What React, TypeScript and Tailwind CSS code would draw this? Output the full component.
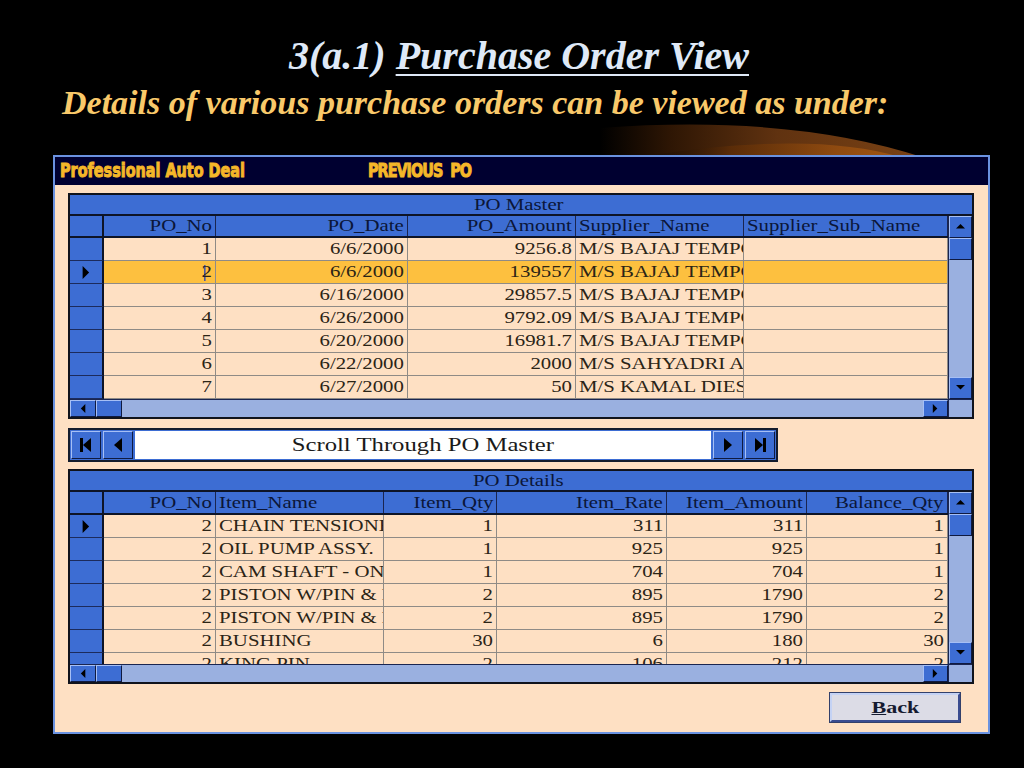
import React from 'react';

const serif = "font-['Liberation_Serif','Times_New_Roman',serif]";

type Align = 'l' | 'r';

function Tri({ dir, size = 8 }: { dir: 'up' | 'down' | 'left' | 'right'; size?: number }) {
  const pts =
    dir === 'up' ? '0,6 5,1 10,6' : dir === 'down' ? '0,1 5,6 10,1' : dir === 'left' ? '7,0 2,5 7,10' : '2,0 7,5 2,10';
  return (
    <svg width={size} height={size} viewBox="0 0 10 10" className="block">
      <polygon points={pts} fill="#000" />
    </svg>
  );
}

function ScrollBtn({ dir, className = '' }: { dir: 'up' | 'down' | 'left' | 'right'; className?: string }) {
  return (
    <div
      className={`bg-[#3d6dd3] border border-t-[#a6bff5] border-l-[#a6bff5] border-b-[#0f1a40] border-r-[#0f1a40] flex items-center justify-center ${className}`}
    >
      <Tri dir={dir} size={9} />
    </div>
  );
}

function Txt({ children, align }: { children: React.ReactNode; align: Align }) {
  return (
    <span
      className={`inline-block whitespace-nowrap scale-x-[1.3] ${align === 'r' ? 'origin-right' : 'origin-left'}`}
    >
      {children}
    </span>
  );
}

function Cell({ children, align, hl }: { children?: React.ReactNode; align: Align; hl?: boolean }) {
  return (
    <div
      className={`h-full overflow-hidden flex items-center border-r border-b border-[#8f8b86] text-[16px] text-[#2b2416] ${
        hl ? 'bg-[#fdc03f]' : 'bg-[#fee0c3]'
      } ${align === 'r' ? 'justify-end pr-[3px]' : 'justify-start pl-[3px]'}`}
    >
      <Txt align={align}>{children}</Txt>
    </div>
  );
}

function HeadCell({ children, align }: { children: React.ReactNode; align: Align }) {
  return (
    <div
      className={`h-full overflow-hidden flex items-center bg-[#3d6dd3] border-r border-[#1a2550] text-[16px] text-[#0b1638] ${
        align === 'r' ? 'justify-end pr-[3px]' : 'justify-start pl-[3px]'
      }`}
    >
      <Txt align={align}>{children}</Txt>
    </div>
  );
}

function Selector({ active }: { active?: boolean }) {
  return (
    <div className="h-full bg-[#3d6dd3] border-r-2 border-r-[#0e1426] border-b border-b-[#1c2b5c] flex items-center justify-center">
      {active && <Tri dir="right" size={13} />}
    </div>
  );
}

function HScroll() {
  return (
    <div className="flex h-[18px] border-t border-[#1a2550]">
      <div className="w-[878px] bg-[#9ab0e0] flex">
        <ScrollBtn dir="left" className="w-[26px]" />
        <div className="w-[26px] bg-[#3d6dd3] border border-t-[#a6bff5] border-l-[#a6bff5] border-b-[#0f1a40] border-r-[#0f1a40]" />
        <div className="flex-1" />
        <ScrollBtn dir="right" className="w-[25px]" />
      </div>
      <div className="w-[24px] bg-[#9ab0e0] border-l border-[#1a2550]" />
    </div>
  );
}

function VScroll({ rowH }: { rowH: string }) {
  return (
    <div className="w-[24px] flex flex-col bg-[#9ab0e0] border-l border-[#1a2550]">
      <ScrollBtn dir="up" className={rowH} />
      <div className={`${rowH} bg-[#3d6dd3] border border-t-[#a6bff5] border-l-[#a6bff5] border-b-[#0f1a40] border-r-[#0f1a40]`} />
      <div className="flex-1" />
      <ScrollBtn dir="down" className={rowH} />
    </div>
  );
}

const master = [
  ['1', '6/6/2000', '9256.8', 'M/S BAJAJ TEMPO LTD.'],
  ['2', '6/6/2000', '139557', 'M/S BAJAJ TEMPO LTD.'],
  ['3', '6/16/2000', '29857.5', 'M/S BAJAJ TEMPO LTD.'],
  ['4', '6/26/2000', '9792.09', 'M/S BAJAJ TEMPO LTD.'],
  ['5', '6/20/2000', '16981.7', 'M/S BAJAJ TEMPO LTD.'],
  ['6', '6/22/2000', '2000', 'M/S SAHYADRI AUTO'],
  ['7', '6/27/2000', '50', 'M/S KAMAL DIES'],
];

const details = [
  ['2', 'CHAIN TENSIONER', '1', '311', '311', '1'],
  ['2', 'OIL PUMP ASSY.', '1', '925', '925', '1'],
  ['2', 'CAM SHAFT - ONE', '1', '704', '704', '1'],
  ['2', 'PISTON W/PIN & RINGS', '2', '895', '1790', '2'],
  ['2', 'PISTON W/PIN & RINGS', '2', '895', '1790', '2'],
  ['2', 'BUSHING', '30', '6', '180', '30'],
  ['2', 'KING PIN', '2', '106', '212', '2'],
];

function Caption({ children }: { children: React.ReactNode }) {
  return (
    <div className="h-[21px] bg-[#3d6dd3] border-b-2 border-[#0e1426] flex items-center justify-center text-[16px] text-[#0b1638]">
      <Txt align="l">
        <span className="inline-block -translate-x-[10px]">{children}</span>
      </Txt>
    </div>
  );
}

function MasterGrid() {
  const cols = 'grid grid-cols-[34px_112px_192px_168px_168px_204px]';
  return (
    <div className="w-[906px] border-2 border-[#10131c]">
      <Caption>PO Master</Caption>
      <div className="flex">
        <div className="w-[878px] flex flex-col">
          <div className={`${cols} h-[22px] border-b-2 border-[#0e1426]`}>
            <div className="bg-[#3d6dd3] border-r-2 border-[#0e1426]" />
            <HeadCell align="r">PO_No</HeadCell>
            <HeadCell align="r">PO_Date</HeadCell>
            <HeadCell align="r">PO_Amount</HeadCell>
            <HeadCell align="l">Supplier_Name</HeadCell>
            <HeadCell align="l">Supplier_Sub_Name</HeadCell>
          </div>
          {master.map((r, i) => {
            const hl = i === 1;
            return (
              <div key={i} className={`${cols} h-[23px]`}>
                <Selector active={hl} />
                <Cell align="r" hl={hl}>
                  {hl && <span className="inline-block w-[1px] h-[16px] bg-[#1e40c0] align-middle -mr-[3px]" />}
                  {r[0]}
                </Cell>
                <Cell align="r" hl={hl}>{r[1]}</Cell>
                <Cell align="r" hl={hl}>{r[2]}</Cell>
                <Cell align="l" hl={hl}>{r[3]}</Cell>
                <Cell align="l" hl={hl} />
              </div>
            );
          })}
        </div>
        <VScroll rowH="h-[22px]" />
      </div>
      <HScroll />
    </div>
  );
}

function DetailsGrid() {
  const cols = 'grid grid-cols-[34px_112px_168px_113px_170px_140px_141px]';
  return (
    <div className="w-[906px] border-2 border-[#10131c]">
      <Caption>PO Details</Caption>
      <div className="flex h-[172px]">
        <div className="w-[878px] flex flex-col">
          <div className={`${cols} h-[23px] shrink-0 border-b-2 border-[#0e1426]`}>
            <div className="bg-[#3d6dd3] border-r-2 border-[#0e1426]" />
            <HeadCell align="r">PO_No</HeadCell>
            <HeadCell align="l">Item_Name</HeadCell>
            <HeadCell align="r">Item_Qty</HeadCell>
            <HeadCell align="r">Item_Rate</HeadCell>
            <HeadCell align="r">Item_Amount</HeadCell>
            <HeadCell align="r">Balance_Qty</HeadCell>
          </div>
          <div className="flex-1 overflow-hidden">
            {details.map((r, i) => (
              <div key={i} className={`${cols} h-[23px]`}>
                <Selector active={i === 0} />
                <Cell align="r">{r[0]}</Cell>
                <Cell align="l">{r[1]}</Cell>
                <Cell align="r">{r[2]}</Cell>
                <Cell align="r">{r[3]}</Cell>
                <Cell align="r">{r[4]}</Cell>
                <Cell align="r">{r[5]}</Cell>
              </div>
            ))}
          </div>
        </div>
        <VScroll rowH="h-[22px]" />
      </div>
      <HScroll />
    </div>
  );
}

function NavBtn({ kind }: { kind: 'first' | 'prev' | 'next' | 'last' }) {
  return (
    <div className="w-[30px] bg-[#3d6dd3] border border-t-[#a6bff5] border-l-[#a6bff5] border-b-[#0f1a40] border-r-[#0f1a40] flex items-center justify-center">
      <svg width="16" height="18" viewBox="0 0 16 18">
        {kind === 'first' && (
          <>
            <rect x="2" y="2" width="3" height="14" fill="#000" />
            <polygon points="13,2 5,9 13,16" fill="#000" />
          </>
        )}
        {kind === 'prev' && <polygon points="12,2 4,9 12,16" fill="#000" />}
        {kind === 'next' && <polygon points="4,2 12,9 4,16" fill="#000" />}
        {kind === 'last' && (
          <>
            <polygon points="3,2 11,9 3,16" fill="#000" />
            <rect x="11" y="2" width="3" height="14" fill="#000" />
          </>
        )}
      </svg>
    </div>
  );
}

function NavBar() {
  return (
    <div className="w-[710px] h-[34px] border-2 border-[#141c2c] bg-[#3d6dd3] flex p-[1px] gap-[2px]">
      <NavBtn kind="first" />
      <NavBtn kind="prev" />
      <div className="flex-1 bg-white flex items-center justify-center text-[19px] text-[#1a1a1a]">
        <span className="inline-block scale-x-[1.3] whitespace-nowrap">Scroll Through PO Master</span>
      </div>
      <NavBtn kind="next" />
      <NavBtn kind="last" />
    </div>
  );
}

export default function App() {
  return (
    <div className={`relative w-[1024px] h-[768px] bg-black overflow-hidden ${serif}`}>
      <svg className="absolute left-[600px] top-[112px]" width="340" height="45" viewBox="0 0 340 45">
        <defs>
          <linearGradient id="outer" x1="0" x2="1" y1="0" y2="0">
            <stop offset="0" stopColor="#000" />
            <stop offset="0.22" stopColor="#2e1604" />
            <stop offset="0.55" stopColor="#603210" />
            <stop offset="1" stopColor="#7a4214" />
          </linearGradient>
          <linearGradient id="inner" x1="0" x2="1" y1="0" y2="0">
            <stop offset="0" stopColor="#000" stopOpacity="0" />
            <stop offset="0.35" stopColor="#5a2c08" />
            <stop offset="0.75" stopColor="#8e4a10" />
            <stop offset="1" stopColor="#a05612" />
          </linearGradient>
        </defs>
        <path d="M0,45 L0,16 Q190,2 322,45 Z" fill="url(#outer)" />
        <path d="M40,45 Q210,18 300,45 Z" fill="url(#inner)" />
      </svg>

      <div className="relative flex flex-col">
        <h1 className="pt-[36px] text-center pl-[14px] text-[40px] leading-none font-bold italic text-[#dfe9f7]">
          3(a.1) <span className="underline decoration-2 underline-offset-[5px]">Purchase Order View</span>
        </h1>
        <p className="mt-[10px] pl-[62px] text-[34px] leading-none font-bold italic text-[#f9c96a]">
          Details of various purchase orders can be viewed as under:
        </p>

        <div className="mt-[35px] ml-[53px] w-[937px] h-[579px] border-2 border-[#6a92e0] bg-[#fee0c3] flex flex-col">
          <div className="h-[28px] shrink-0 bg-[#000030] flex items-center text-[#f5b729] font-['DejaVu_Sans_Condensed','DejaVu_Sans',sans-serif] font-bold text-[16px] [-webkit-text-stroke:0.8px_#f5b729]">
            <span className="ml-[5px] w-[308px] inline-block scale-y-[1.2] whitespace-nowrap tracking-[0px]">Professional Auto Deal</span>
            <span className="inline-block scale-y-[1.2] whitespace-nowrap tracking-[-1px]">PREVIOUS&nbsp; PO</span>
          </div>
          <div className="flex-1 flex flex-col items-start pl-[13px] pt-[8px]">
            <MasterGrid />
            <div className="mt-[9px]">
              <NavBar />
            </div>
            <div className="mt-[7px]">
              <DetailsGrid />
            </div>
            <div className="mt-[8px] self-end mr-[27px] w-[132px] h-[31px] bg-[#dcdce6] border border-[#33406a] flex">
              <div className="flex-1 border-2 border-t-[#c4d2f4] border-l-[#c4d2f4] border-b-[#3a4c90] border-r-[#3a4c90] flex items-center justify-center text-[17px] font-bold text-[#141a30]">
                <span className="inline-block scale-x-[1.3]">
                  <span className="underline">B</span>ack
                </span>
              </div>
            </div>
          </div>
        </div>
      </div>
    </div>
  );
}
